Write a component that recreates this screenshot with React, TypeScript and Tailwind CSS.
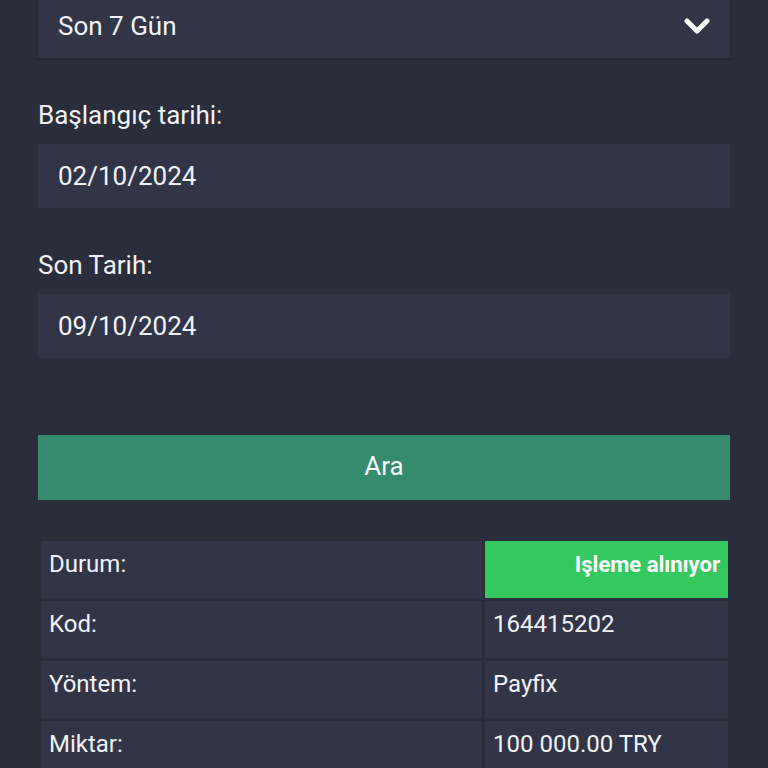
const rows = [
  { label: "Durum:", value: "Işleme alınıyor", status: true },
  { label: "Kod:", value: "164415202" },
  { label: "Yöntem:", value: "Payfix" },
  { label: "Miktar:", value: "100 000.00 TRY" },
];

function Chevron() {
  return (
    <svg width="26" height="18" viewBox="0 0 26 18" fill="none">
      <polyline
        points="3,4 13,14 23,4"
        stroke="white"
        strokeWidth="5"
        strokeLinecap="round"
        strokeLinejoin="round"
      />
    </svg>
  );
}

export default function App() {
  return (
    <div
      className="h-[768px] overflow-hidden bg-[#2a2d3b] text-[#f1f2f5]"
      style={{ fontFamily: "Roboto, 'Noto Sans', sans-serif" }}
    >
      <div className="flex flex-col px-[38px] -mt-[6px]">
        <div className="flex h-[64px] items-center justify-between bg-[#323548] pl-[20px] pr-[20px] shadow-[0_1px_2px_rgba(0,0,0,0.25)]">
          <span className="text-[26px]">Son 7 Gün</span>
          <Chevron />
        </div>

        <label className="mt-[42px] text-[26px] leading-[30px]">Başlangıç tarihi:</label>
        <div className="mt-[14px] flex h-[64px] items-center bg-[#323548] pl-[20px] text-[26px]">
          02/10/2024
        </div>

        <label className="mt-[42px] text-[26px] leading-[30px]">Son Tarih:</label>
        <div className="mt-[14px] flex h-[64px] items-center bg-[#323548] pl-[20px] text-[26px]">
          09/10/2024
        </div>

        <button className="mt-[77px] flex h-[65px] items-center justify-center bg-[#368a6e] pb-[2px] text-[26px] text-[#f4f8f6]">
          Ara
        </button>

        <div className="mt-[41px] grid grid-cols-[441px_243px] gap-[3px] pl-[3px]">
          {rows.map((r) => (
            <div key={r.label} className="contents">
              <div className="flex h-[57px] items-start bg-[#323548] pl-[8px] pt-[8px] text-[24px] leading-[30px]">
                {r.label}
              </div>
              {r.status ? (
                <div className="flex h-[57px] items-start justify-end bg-[#33c95f] pr-[8px] pt-[9px] text-[22px] font-bold leading-[30px] text-white">
                  {r.value}
                </div>
              ) : (
                <div className="flex h-[57px] items-start bg-[#323548] pl-[8px] pt-[8px] text-[24px] leading-[30px]">
                  {r.value}
                </div>
              )}
            </div>
          ))}
        </div>
      </div>
    </div>
  );
}
